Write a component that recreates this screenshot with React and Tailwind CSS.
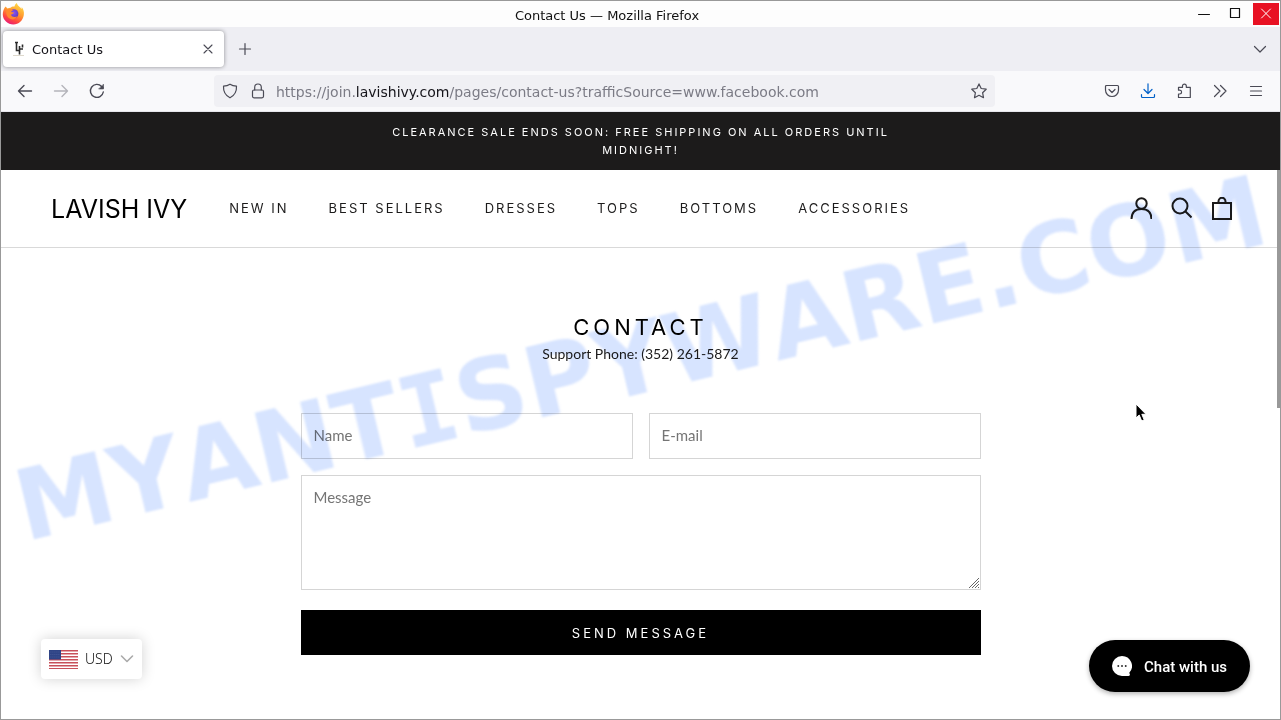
import React from "react";

const navLinks = ["New In", "Best Sellers", "Dresses", "Tops", "Bottoms", "Accessories"];

const Icon = ({ className = "h-4 w-4", box = 16, width = 1.2, children }) => (
  <svg
    className={className}
    viewBox={`0 0 ${box} ${box}`}
    fill="none"
    stroke="currentColor"
    strokeWidth={width}
    strokeLinecap="round"
    strokeLinejoin="round"
    aria-hidden="true"
  >
    {children}
  </svg>
);

const FirefoxLogo = () => (
  <svg className="h-6 w-6" viewBox="0 0 24 24" aria-hidden="true">
    <defs>
      <linearGradient id="fox" x1="0.8" y1="0" x2="0.3" y2="1">
        <stop offset="0" stopColor="#ffe14a" />
        <stop offset="0.45" stopColor="#ff9a2e" />
        <stop offset="0.75" stopColor="#ff4a3d" />
        <stop offset="1" stopColor="#e8187c" />
      </linearGradient>
      <radialGradient id="globe" cx="0.5" cy="0.4" r="0.6">
        <stop offset="0" stopColor="#8a55f5" />
        <stop offset="1" stopColor="#5b3bb8" />
      </radialGradient>
    </defs>
    <path
      d="M4.500 4.500L6.500 6.500c1-.6 2-.8 3-.8C10.500 4.800 12 4.200 13.500 4.500 13.800 3 14.500 1.800 15.800 1c.3 2 2 3 3.500 4.500l1.200 1.500c.3-.8.300-1.500.200-2C22.500 7 23.300 10 22.800 13c-.8 5.500-5 9.500-10.500 9.500S1.800 18 1.800 12.500c0-3 .9-5.800 2.700-8z"
      fill="url(#fox)"
    />
    <circle cx="12.800" cy="11.800" r="4.600" fill="url(#globe)" />
    <path d="M5.500 8c2-1.500 5-1.500 7 .5-1.500 0-2 .7-2.500 1.500l3 .5c0 1-2 1.500-3 2.200.8 2.300 4 2.800 6 1.600-1 2.700-4 3.700-6.500 2.700C6 15.500 4.500 11.500 5.500 8z" fill="#ff8a2e" />
  </svg>
);

const TitleBar = () => (
  <div className="flex h-[26px] items-center bg-[#fdfdfd]">
    <FirefoxLogo />
    <p className="flex-1 pt-[3px] text-center text-[13px] text-[#111]">
      Contact Us — Mozilla Firefox
    </p>
    <div className="flex items-center justify-end text-[#111]">
      <button aria-label="Minimize" className="flex h-6 w-[30px] items-center justify-center">
        <Icon className="h-3 w-3" box={12} width={1}><path d="M0.5 6.500h11" /></Icon>
      </button>
      <button aria-label="Maximize" className="flex h-6 w-8 items-center justify-center">
        <Icon className="h-3 w-3" box={12} width={1}><path d="M1.500 0.500h9v9h-9z" strokeWidth="1.200" /></Icon>
      </button>
      <button aria-label="Close" className="mr-px ml-0.5 flex h-[22px] w-[26px] items-center justify-center bg-[#e81123] text-white">
        <Icon className="h-3 w-3" box={12} width={1}><path d="M1.500 1l9 9M10.500 1l-9 9" /></Icon>
      </button>
    </div>
  </div>
);

const TabStrip = () => (
  <div className="flex h-11 items-center bg-[#eeeef3] pl-0.5 text-[#4a4a55]">
    <div className="flex h-9 w-[221px] items-center rounded bg-white pr-2 pl-2 shadow-[0_0_4px_rgba(0,0,0,0.4)]">
      <svg className="h-4 w-4" viewBox="0 0 16 16" aria-hidden="true">
        <path d="M4 1.500h3M5.500 1.500v8h3M8.500 5v8.500M8.500 8h3.500M11.500 3.500v3" stroke="#2b2b2b" strokeWidth="1.600" fill="none" />
        <path d="M2 14.500h11" stroke="#ddd8cc" strokeWidth="1" />
      </svg>
      <span className="flex-1 pt-0.5 pl-[5px] text-[13px] text-[#15141a]">Contact Us</span>
      <button aria-label="Close tab" className="flex h-4 w-4 items-center justify-center">
        <Icon className="h-3 w-3" box={12} width={1.1}><path d="M2 2l8 8M10 2l-8 8" /></Icon>
      </button>
    </div>
    <button aria-label="New tab" className="ml-[13px] flex h-4 w-4 items-center justify-center">
      <Icon className="h-3.5 w-3.5" box={14}><path d="M7 1.500v11M1.500 7h11" /></Icon>
    </button>
    <button aria-label="List all tabs" className="mr-3 ml-auto h-4 w-4">
      <Icon><path d="M2.500 5.500L8 11l5.500-5.500" /></Icon>
    </button>
  </div>
);

const Toolbar = () => (
  <div className="flex h-[41px] items-center border-b border-[#e6e6ec] bg-[#f9f9fb] text-[#4a4a55]">
    <div className="flex w-[213px] items-center gap-5 pl-4">
      <button aria-label="Back">
        <Icon width={1.4}><path d="M14.500 8h-13M7 2.500L1.500 8 7 13.500" /></Icon>
      </button>
      <button aria-label="Forward" className="text-[#b4b4ba]">
        <Icon width={1.4}><path d="M1.500 8h13M9 2.500L14.500 8 9 13.500" /></Icon>
      </button>
      <button aria-label="Reload">
        <Icon width={1.4}>
          <path d="M14.300 9A6.500 6.500 0 1 1 12.600 3.400L14 4.800" />
          <path d="M14.500 1.500v4.500H10z" fill="currentColor" strokeWidth="0.6" />
        </Icon>
      </button>
    </div>
    <div className="flex h-8 flex-1 items-center rounded bg-[#f0f0f4] px-2">
      <Icon>
        <path d="M8 1.200c2 1.300 4 1.800 6.500 1.900.3 5.500-2 9.400-6.500 11.700C3.500 12.500 1.200 8.600 1.500 3.100 4 3 6 2.500 8 1.200z" />
      </Icon>
      <Icon className="ml-3 h-4 w-4">
        <rect x="2.500" y="7" width="11" height="7.800" rx="1.500" />
        <path d="M4.700 7V4.300a3.300 3.300 0 0 1 6.600 0V7" />
      </Icon>
      <div
        role="textbox"
        aria-label="Address"
        contentEditable
        suppressContentEditableWarning
        className="flex-1 pt-0.5 pl-2.5 text-[14px] whitespace-nowrap text-[#7b7b85]"
      >
        https://join.<span className="text-[#15141a]">lavishivy.com</span>/pages/contact-us?trafficSource=www.facebook.com
      </div>
      <button aria-label="Bookmark">
        <Icon>
          <path d="M8 0.900l2.200 4.600 5 .7-3.600 3.500.9 5-4.500-2.400-4.500 2.400.9-5L.8 6.200l5-.7z" />
        </Icon>
      </button>
    </div>
    <div className="flex w-[285px] items-center justify-end gap-5 pr-4">
      <button aria-label="Save to Pocket">
        <Icon>
          <path d="M2.500 2.500h11c.6 0 1 .4 1 1V7c0 4-3 6.500-6.500 6.500S1.500 11 1.500 7V3.500c0-.6.4-1 1-1z" />
          <path d="M5 6.500l3 3 3-3" />
        </Icon>
      </button>
      <button aria-label="Downloads" className="text-[#0060c8]">
        <Icon><path d="M8 0.800v9.700M4 6.500l4 4 4-4M1.500 11.500v2c0 .6.4 1 1 1h11c.6 0 1-.4 1-1v-2" /></Icon>
      </button>
      <button aria-label="Extensions">
        <Icon>
          <path d="M2.500 14.500V11h1.200a1.900 1.900 0 0 0 0-3.800H2.500V4.300h4V3a1.900 1.900 0 0 1 3.800 0v1.300h4v10.200z" />
        </Icon>
      </button>
      <button aria-label="More tools">
        <Icon><path d="M2.500 2.500L8 8l-5.500 5.500M8.500 2.500L14 8l-5.500 5.500" /></Icon>
      </button>
      <button aria-label="Menu">
        <Icon><path d="M2.500 3.500h11M2.500 8h11M2.500 12.500h11" /></Icon>
      </button>
    </div>
  </div>
);

const SiteHeader = () => (
  <header className="flex h-[78px] items-center border-b border-[#d9d9d9] px-12">
    <a href="/" className="pt-0.5 pl-0.5 text-[25px] text-black">LAVISH IVY</a>
    <nav className="ml-[42px] flex gap-10 text-[13px] tracking-[2px] text-[#1c1b1b] uppercase">
      {navLinks.map((link) => (
        <a key={link} href="#">{link}</a>
      ))}
    </nav>
    <div className="ml-auto flex gap-[18px] text-[#1c1b1b]">
      <a href="#account" aria-label="Account">
        <svg className="h-[22px] w-[22px]" viewBox="0 0 22 22" fill="none" stroke="currentColor" strokeWidth="2">
          <circle cx="11.500" cy="6.500" r="5.200" />
          <path d="M1.500 22.500c0-7 4-10.500 10-10.500S21.500 15.500 21.500 22.500" />
        </svg>
      </a>
      <a href="#search" aria-label="Search">
        <svg className="h-[22px] w-[22px]" viewBox="0 0 22 22" fill="none" stroke="currentColor" strokeWidth="2">
          <circle cx="10" cy="9" r="7.500" />
          <path d="M15 14L21.500 20.500" />
        </svg>
      </a>
      <a href="#cart" aria-label="Cart">
        <svg className="h-6 w-[22px]" viewBox="0 0 22 24" fill="none" stroke="currentColor" strokeWidth="2">
          <path d="M3 6h18v16H3zM8.500 6V4.500a3.500 3.800 0 0 1 7 0V6" />
        </svg>
      </a>
    </div>
  </header>
);

const ContactForm = () => {
  const field = "border border-[#d5d5d5] bg-transparent px-3 text-[15px] leading-5 placeholder-[#757575] outline-none";

  return (
    <main className="mx-auto w-full max-w-[680px] pt-16 font-[Lato,sans-serif] text-[#1c1b1b]">
      <h1 className="text-center font-[Inter,sans-serif] text-[22px] leading-[31px] tracking-[4px] text-black">CONTACT</h1>
      <p className="text-center text-[14px] leading-[22px]">Support Phone: (352) 261-5872</p>
      <form className="mt-12">
        <div className="flex gap-4">
          <input type="text" aria-label="Name" placeholder="Name" className={`${field} h-[46px] min-w-0 flex-1 pb-0.5`} />
          <input type="email" aria-label="E-mail" placeholder="E-mail" className={`${field} h-[46px] min-w-0 flex-1 pb-0.5`} />
        </div>
        <div className="relative mt-4">
          <textarea
            aria-label="Message"
            placeholder="Message"
            className={`${field} block h-[115px] w-full resize-y py-[11px] [&::-webkit-resizer]:hidden`}
          />
          <svg className="pointer-events-none absolute right-0.5 bottom-0.5 h-2.5 w-2.5" viewBox="0 0 10 10" stroke="#666" strokeWidth="1" aria-hidden="true">
            <path d="M0 10L10 0M3 10l7-7M6 10l4-4M9 10l1-1" />
          </svg>
        </div>
        <button type="button" className="mt-5 h-[45px] w-full bg-black pt-0.5 font-[Inter,sans-serif] text-[13px] tracking-[3px] text-white">
          SEND MESSAGE
        </button>
      </form>
    </main>
  );
};

const Flag = () => (
  <svg className="h-[19px] w-[29px]" viewBox="0 0 29 19" aria-hidden="true">
    <rect width="29" height="19" fill="#fff" />
    {[0, 3, 6, 9, 12, 15, 18].map((y) => (
      <rect key={y} y={y} width="29" height="1.500" fill="#c8505a" />
    ))}
    <rect width="12" height="9.500" fill="#2f4486" />
    {[2, 4.500, 7].map((y) => (
      <path key={y} d={`M1.500 ${y}h9`} stroke="#5a6aa5" strokeWidth="0.7" strokeDasharray="0.8 1.200" />
    ))}
  </svg>
);

const CurrencyPicker = () => (
  <div className="absolute bottom-10 left-10 flex h-10 w-[101px] items-center rounded bg-white pl-2 shadow-[0_0_14px_rgba(0,0,0,0.18)]">
    <Flag />
    <select aria-label="Currency" className="ml-[7px] w-[34px] appearance-none bg-transparent pb-0.5 font-['Noto_Sans',sans-serif] text-[14px] font-light text-[#111]">
      <option>USD</option>
    </select>
    <Icon className="h-4 w-4 text-[#aaa]" width={1.6}><path d="M2.500 5L8 10.500 13.500 5" /></Icon>
  </div>
);

const ChatButton = () => (
  <button className="absolute right-[30px] bottom-[27px] flex h-[52px] w-[161px] items-center rounded-full bg-black pl-[23px] font-[Roboto,sans-serif] text-[15px] font-medium text-white shadow-[0_2px_5px_rgba(0,0,0,0.3)]">
    <svg className="h-5 w-5" viewBox="0 0 20 20" aria-hidden="true">
      <path d="M10 0a10 10 0 1 0 0 20h6.500c1.200 0 1.800-1 1.200-2l-.4-1.200A10 10 0 0 0 10 0z" fill="#fff" />
      <path d="M5.500 9.200h1.600v1.600H5.500zM9.200 9.200h1.600v1.600H9.200zM12.900 9.200h1.600v1.600h-1.600z" fill="#000" />
    </svg>
    <span className="ml-3 pt-0.5">Chat with us</span>
  </button>
);

const App = () => {
  return (
    <div className="relative flex min-h-screen flex-col overflow-hidden border border-[#999] bg-white font-['DejaVu_Sans',sans-serif]">
      <TitleBar />
      <TabStrip />
      <Toolbar />

      <div className="relative flex-1 font-[Inter,sans-serif]">
        <div className="bg-[#1c1b1b] px-4 py-[11px] text-white">
          <p className="mx-auto max-w-[560px] text-center text-[11px] leading-[18px] tracking-[2px]">
            CLEARANCE SALE ENDS SOON: FREE SHIPPING ON ALL ORDERS UNTIL MIDNIGHT!
          </p>
        </div>
        <SiteHeader />
        <ContactForm />

        {/* Page scrollbar */}
        <div className="absolute top-[58px] right-0 h-[238px] w-[3px] bg-[#999]" />
        <CurrencyPicker />
        <ChatButton />
      </div>

      {/* Watermark, the I is set in the mono face for its slab serifs */}
      <div
        aria-hidden="true"
        className="pointer-events-none absolute top-[456px] left-[28px] origin-bottom-left -rotate-[13.5deg] text-[98px] leading-[100px] font-bold whitespace-nowrap text-[#d7e4ff] mix-blend-multiply blur-[1px] [font-kerning:none]"
      >
        MYANT<span className="font-['DejaVu_Sans_Mono',monospace]">I</span>SPYWARE.COM
      </div>

      {/* Mouse pointer */}
      <svg className="pointer-events-none absolute top-[402px] left-[1134px] h-5 w-3" viewBox="0 0 12 20" aria-hidden="true">
        <path d="M1 1v14l3.200-3 2.500 6 2.500-1.200L6.800 11.300H11z" fill="#000" stroke="#fff" />
      </svg>
    </div>
  );
};

export default App;
